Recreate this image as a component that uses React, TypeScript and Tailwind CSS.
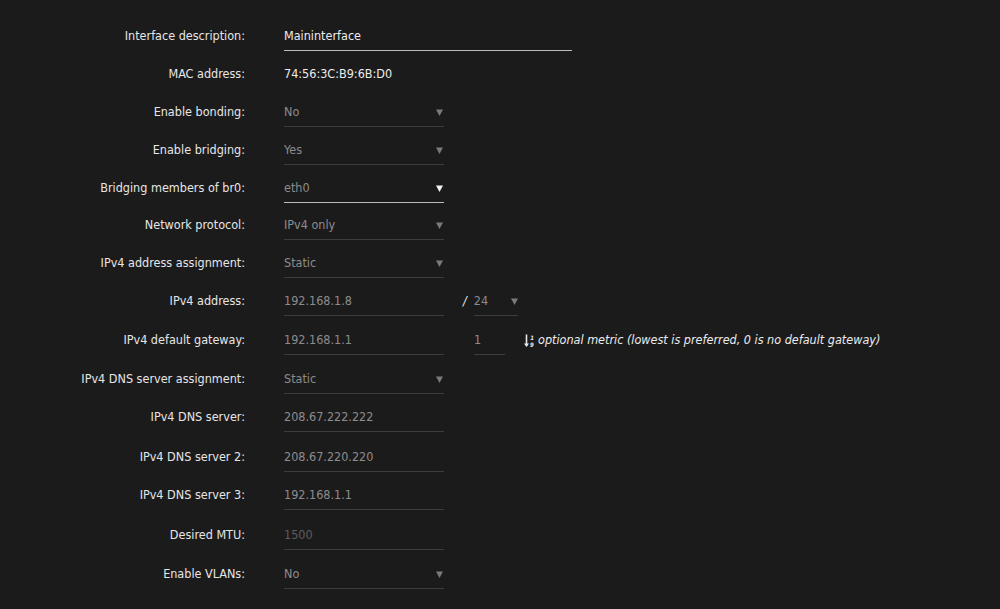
import React from "react";

type Row = {
  label: string;
  kind: "text" | "select" | "static" | "ip" | "gw";
  value: string;
  mt: string;
  active?: boolean;
  brightText?: boolean;
  dim?: boolean;
  wide?: boolean;
};

const rows: Row[] = [
  { label: "Interface description:", kind: "text", value: "Maininterface", active: true, brightText: true, wide: true, mt: "mt-0" },
  { label: "MAC address:", kind: "static", value: "74:56:3C:B9:6B:D0", mt: "mt-[9px]" },
  { label: "Enable bonding:", kind: "select", value: "No", mt: "mt-[9px]" },
  { label: "Enable bridging:", kind: "select", value: "Yes", mt: "mt-[9px]" },
  { label: "Bridging members of br0:", kind: "select", value: "eth0", active: true, mt: "mt-[9px]" },
  { label: "Network protocol:", kind: "select", value: "IPv4 only", mt: "mt-[8px]" },
  { label: "IPv4 address assignment:", kind: "select", value: "Static", mt: "mt-[9px]" },
  { label: "IPv4 address:", kind: "ip", value: "192.168.1.8", mt: "mt-[9px]" },
  { label: "IPv4 default gateway:", kind: "gw", value: "192.168.1.1", mt: "mt-[10px]" },
  { label: "IPv4 DNS server assignment:", kind: "select", value: "Static", mt: "mt-[10px]" },
  { label: "IPv4 DNS server:", kind: "text", value: "208.67.222.222", mt: "mt-[9px]" },
  { label: "IPv4 DNS server 2:", kind: "text", value: "208.67.220.220", mt: "mt-[11px]" },
  { label: "IPv4 DNS server 3:", kind: "text", value: "192.168.1.1", mt: "mt-[9px]" },
  { label: "Desired MTU:", kind: "text", value: "1500", dim: true, mt: "mt-[11px]" },
  { label: "Enable VLANs:", kind: "select", value: "No", mt: "mt-[10px]" },
];

function Arrow({ bright }: { bright?: boolean }) {
  return (
    <svg width="7" height="7" viewBox="0 0 7 7" className="shrink-0">
      <path d="M0 0.5 H7 L3.5 7 Z" fill={bright ? "#f2f2f2" : "#7a7a7a"} />
    </svg>
  );
}

function SortIcon() {
  return (
    <svg width="12" height="14" viewBox="0 0 12 14" className="shrink-0">
      <path d="M2.5 0.5 V12" stroke="#e8e8e8" strokeWidth="1.6" />
      <path d="M0 9.5 L2.5 13 L5 9.5 Z" fill="#e8e8e8" />
      <text x="6.2" y="5.6" fontSize="6" fill="#e8e8e8" fontFamily="DejaVu Sans" fontWeight="bold">1</text>
      <text x="6" y="12.8" fontSize="6" fill="#e8e8e8" fontFamily="DejaVu Sans" fontWeight="bold">9</text>
    </svg>
  );
}

function Field({ row }: { row: Row }) {
  const underline = row.active ? "border-[#bdbdbd]" : "border-[#3c3c3c]";
  const textColor = row.brightText ? "text-[#ececec]" : row.dim ? "text-[#5c5c5c]" : "text-[#8c8c8c]";
  if (row.kind === "static") {
    return <div className="text-[#ececec] h-[29px] flex items-center">{row.value}</div>;
  }
  if (row.kind === "text") {
    return (
      <div className={`h-[29px] flex items-center border-b ${underline} ${textColor} ${row.wide ? "w-[288px]" : "w-[160px]"}`}>
        {row.value}
      </div>
    );
  }
  if (row.kind === "select") {
    return (
      <div className={`h-[29px] flex items-center justify-between pr-[1px] border-b ${underline} ${textColor} w-[160px]`}>
        <span>{row.value}</span>
        <Arrow bright={row.active} />
      </div>
    );
  }
  if (row.kind === "ip") {
    return (
      <div className="flex items-center">
        <div className="h-[29px] flex items-center border-b border-[#3c3c3c] text-[#8c8c8c] w-[160px]">{row.value}</div>
        <span className="ml-[19px] text-[#ececec] italic">/</span>
        <div className="ml-[7px] h-[29px] w-[44px] flex items-center justify-between border-b border-[#3c3c3c] text-[#8c8c8c]">
          <span>24</span>
          <Arrow />
        </div>
      </div>
    );
  }
  return (
    <div className="flex items-center">
      <div className="h-[29px] flex items-center border-b border-[#3c3c3c] text-[#8c8c8c] w-[160px]">{row.value}</div>
      <div className="ml-[30px] h-[29px] w-[31px] flex items-center border-b border-[#3c3c3c] text-[#8c8c8c]">1</div>
      <div className="ml-[19px] flex items-center gap-[2px] text-[#ececec] italic">
        <SortIcon />
        <span>optional metric (lowest is preferred, 0 is no default gateway)</span>
      </div>
    </div>
  );
}

export default function App() {
  return (
    <div
      className="w-[1000px] h-[609px] bg-[#1c1b1c] overflow-hidden pt-[22px] flex flex-col text-[12.5px]"
      style={{ fontFamily: "'DejaVu Sans Condensed', 'DejaVu Sans', sans-serif", fontStretch: "condensed" }}
    >
      {rows.map((r, i) => (
        <div key={i} className={`flex items-center h-[29px] ${r.mt}`}>
          <div className="w-[245px] text-right text-[#e6e6e6] shrink-0">{r.label}</div>
          <div className="ml-[39px]">
            <Field row={r} />
          </div>
        </div>
      ))}
    </div>
  );
}
